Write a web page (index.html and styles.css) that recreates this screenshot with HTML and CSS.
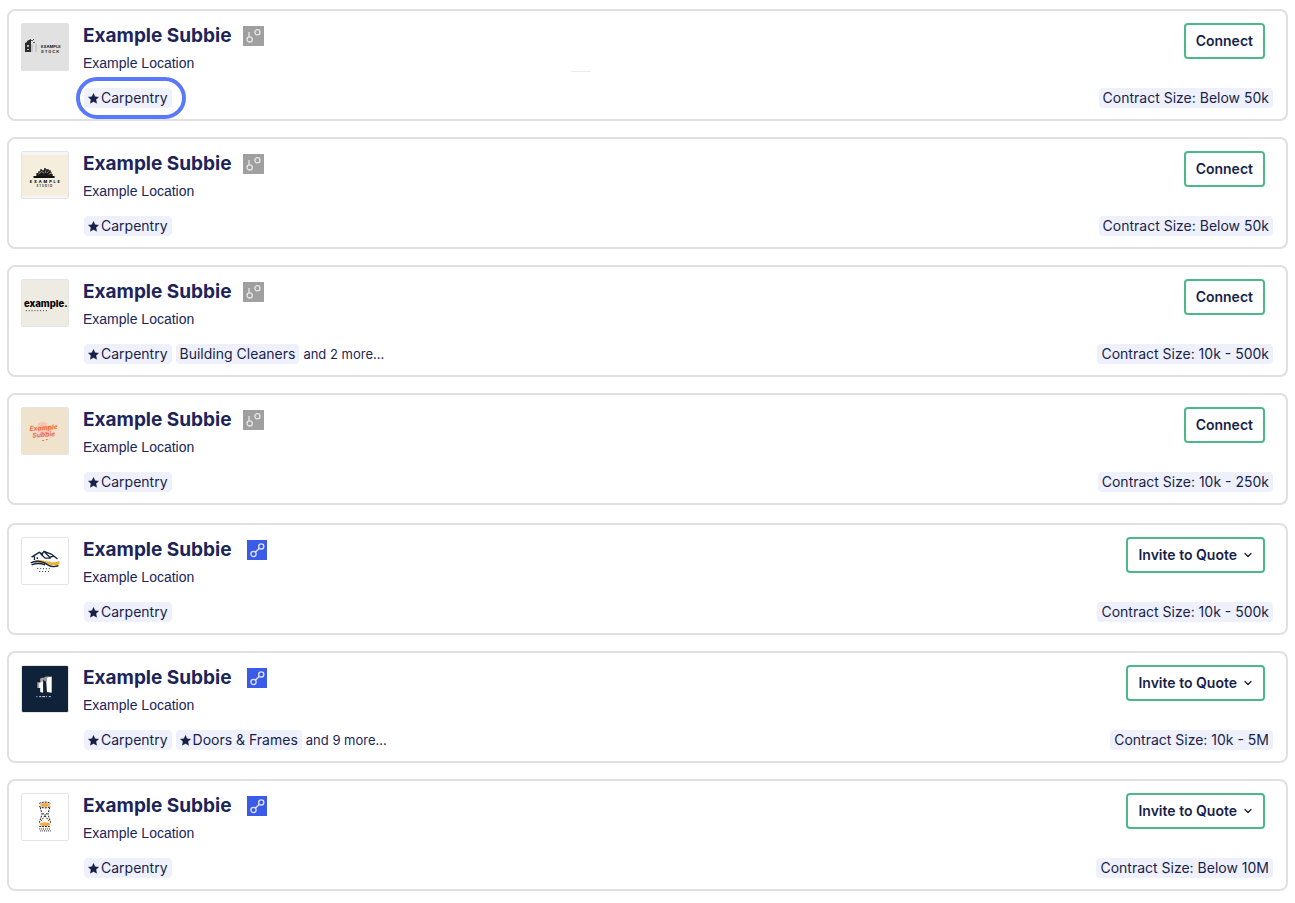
FILE: index.html
```html
<!DOCTYPE html>
<html lang="en">
<head>
  <meta charset="UTF-8" />
  <meta name="viewport" content="width=device-width, initial-scale=1.0" />
  <title>Subbies</title>
  <link rel="stylesheet" href="styles.css">
</head>
<body>
  <!-- shared icons -->
  <svg class="sprite" aria-hidden="true">
    <symbol id="star" viewBox="0 0 24 24">
      <path d="M12 1l3.3 7.2 7.7.9-5.7 5.3 1.5 7.8L12 18.3l-6.8 3.9 1.5-7.8L1 9.1l7.7-.9z" fill="currentColor" stroke="currentColor" stroke-linejoin="round"/>
    </symbol>
    <symbol id="unlinked" viewBox="0 0 21 20">
      <g fill="none" stroke="#e6e6e6" stroke-width="1.3">
        <circle cx="6.7" cy="13.4" r="2.6"/>
        <circle cx="14.4" cy="6.3" r="2.6"/>
        <path d="M6 11V6"/>
      </g>
    </symbol>
    <symbol id="linked" viewBox="0 0 20 20">
      <g fill="none" stroke="#dfe5ff" stroke-width="1.3">
        <circle cx="6.5" cy="14" r="2.6"/>
        <circle cx="14.2" cy="6.4" r="2.6"/>
        <path d="M8.3 12.2l4.1-4"/>
      </g>
    </symbol>
    <symbol id="chevron" viewBox="0 0 10 10">
      <path d="M2 3.5l3 3 3-3" fill="none" stroke="currentColor" stroke-width="1.3" stroke-linecap="round" stroke-linejoin="round"/>
    </symbol>
  </svg>

  <main>
    <section class="group">
      <article class="card">
        <svg class="logo" viewBox="0 0 48 48">
          <rect width="48" height="48" fill="#e1e1e1"/>
          <path d="M4 20l2-1v-1l4-2v13H4z" fill="#2b2b2b"/>
          <path d="M6 22h2v2H6zM6 26h2v1H6z" fill="#bbb"/>
          <path d="M10 17h2v1h-2zM12 19h2v1h-2zM12 16h1v1h-1z" fill="#555"/>
          <path d="M11 21v8M15 21v8" stroke="#b5b5b5"/>
          <text x="20" y="25" font-size="4" font-weight="800" fill="#333">EXAMPLE</text>
          <text x="20" y="30" font-size="4" font-weight="800" fill="#444" letter-spacing="1">STOCK</text>
        </svg>
        <div class="info">
          <div class="title">
            <h2>Example Subbie</h2>
            <svg class="status unlinked"><use href="#unlinked"/></svg>
          </div>
          <p class="location">Example Location</p>
          <div class="tags">
            <span class="tag highlight"><svg class="star"><use href="#star"/></svg>Carpentry</span>
          </div>
        </div>
        <span class="dash"></span>
        <div class="actions">
          <button type="button">Connect</button>
          <span class="tag">Contract Size: Below 50k</span>
        </div>
      </article>

      <article class="card">
        <svg class="logo framed" viewBox="0 0 48 48">
          <rect width="48" height="48" fill="#f5f5f5"/>
          <rect y="3" width="48" height="43" fill="#f5eedc"/>
          <path d="M12 25h22v2H12z" fill="#111"/>
          <path d="M15 25v-3h2v-2h2v-2h2v1h2v-2h2v1h3v1h2v2h1v2h1v2z" fill="#1c1a18"/>
          <path d="M17 23l3-2M20 20l3 2M25 19l-1 3M28 20l-2 2M31 22l-3 1" stroke="#d8d0c0" stroke-width=".7"/>
          <text x="8" y="32" font-size="4" font-weight="800" fill="#111" letter-spacing="2">EXAMPLE</text>
          <text x="15" y="36" font-size="3" font-weight="700" fill="#333" letter-spacing="1">STUDIO</text>
        </svg>
        <div class="info">
          <div class="title">
            <h2>Example Subbie</h2>
            <svg class="status unlinked"><use href="#unlinked"/></svg>
          </div>
          <p class="location">Example Location</p>
          <div class="tags">
            <span class="tag"><svg class="star"><use href="#star"/></svg>Carpentry</span>
          </div>
        </div>
        <div class="actions">
          <button type="button">Connect</button>
          <span class="tag">Contract Size: Below 50k</span>
        </div>
      </article>

      <article class="card">
        <svg class="logo framed" viewBox="0 0 48 48">
          <rect width="48" height="48" fill="#eeebe2"/>
          <text x="2" y="28" font-size="10" font-weight="800" fill="#000">example.</text>
          <path d="M4 32h24" stroke="#222" stroke-dasharray="1 2"/>
        </svg>
        <div class="info">
          <div class="title">
            <h2>Example Subbie</h2>
            <svg class="status unlinked"><use href="#unlinked"/></svg>
          </div>
          <p class="location">Example Location</p>
          <div class="tags">
            <span class="tag"><svg class="star"><use href="#star"/></svg>Carpentry</span>
            <span class="tag">Building Cleaners</span>
            <span class="more">and 2 more...</span>
          </div>
        </div>
        <div class="actions">
          <button type="button">Connect</button>
          <span class="tag">Contract Size: 10k - 500k</span>
        </div>
      </article>

      <article class="card">
        <svg class="logo framed" viewBox="0 0 48 48">
          <rect width="48" height="48" fill="#f0e3cd"/>
          <path d="M17 16l5-2 5 2-2 3h5l3 3-5 4-8 1-4-3z" fill="#f7c6b5"/>
          <g fill="#ee6a35" font-size="7" font-weight="700" font-style="italic">
            <text x="8" y="24" transform="rotate(-4 8 24)">Example</text>
            <text x="11" y="31" transform="rotate(-4 11 31)">Subbie</text>
          </g>
          <path d="M21 34h2M25 33h2" stroke="#ee6a35"/>
        </svg>
        <div class="info">
          <div class="title">
            <h2>Example Subbie</h2>
            <svg class="status unlinked"><use href="#unlinked"/></svg>
          </div>
          <p class="location">Example Location</p>
          <div class="tags">
            <span class="tag"><svg class="star"><use href="#star"/></svg>Carpentry</span>
          </div>
        </div>
        <div class="actions">
          <button type="button">Connect</button>
          <span class="tag">Contract Size: 10k - 250k</span>
        </div>
      </article>
    </section>

    <section class="group">
      <article class="card">
        <svg class="logo framed" viewBox="0 0 48 48">
          <rect width="48" height="48" fill="#fff"/>
          <path d="M14 23c7 0 10 1 16 2 3 1 6 0 9-1v3c-4 3-9 1-13 0-4-1-7-2-12-1z" fill="#efb231"/>
          <g fill="none" stroke="#14263f" stroke-width="1.4">
            <path d="M10 20l8-5 4 2M13 19v4M16 20v2M20 18l3-4 8 3 6 5M19 16l5 5M23 14l6 6 4-1M24 21h6"/>
            <path d="M9 26c6-3 12-2 18 2s7 1 11 1"/>
            <path d="M10 28c5-2 9-2 14 0"/>
          </g>
          <path d="M16 32h14M18 35h11" stroke="#14263f" stroke-dasharray="1 2"/>
        </svg>
        <div class="info">
          <div class="title">
            <h2>Example Subbie</h2>
            <svg class="status linked"><use href="#linked"/></svg>
          </div>
          <p class="location">Example Location</p>
          <div class="tags">
            <span class="tag"><svg class="star"><use href="#star"/></svg>Carpentry</span>
          </div>
        </div>
        <div class="actions">
          <button type="button">Invite to Quote<svg class="chevron"><use href="#chevron"/></svg></button>
          <span class="tag">Contract Size: 10k - 500k</span>
        </div>
      </article>

      <article class="card">
        <svg class="logo framed" viewBox="0 0 48 48">
          <rect width="48" height="48" fill="#10213a"/>
          <path d="M16 17h3v-4l3-1v6l-3 5h-3z" fill="#aaa"/>
          <path d="M18 18l4-2v12l-3-1v-4h-1zM25 12l6-1v17l-5-1z" fill="#fff"/>
          <path d="M21 13l4-2h5l-4 1v5l-3-2z" fill="#999"/>
          <path d="M15 32h15" stroke="#e5e8ee" stroke-dasharray="1 2 2 1 3 1"/>
        </svg>
        <div class="info">
          <div class="title">
            <h2>Example Subbie</h2>
            <svg class="status linked"><use href="#linked"/></svg>
          </div>
          <p class="location">Example Location</p>
          <div class="tags">
            <span class="tag"><svg class="star"><use href="#star"/></svg>Carpentry</span>
            <span class="tag"><svg class="star"><use href="#star"/></svg>Doors &amp; Frames</span>
            <span class="more">and 9 more...</span>
          </div>
        </div>
        <div class="actions">
          <button type="button">Invite to Quote<svg class="chevron"><use href="#chevron"/></svg></button>
          <span class="tag">Contract Size: 10k - 5M</span>
        </div>
      </article>

      <article class="card">
        <svg class="logo framed" viewBox="0 0 48 48">
          <rect width="48" height="48" fill="#fff"/>
          <ellipse cx="24" cy="11.5" rx="5" ry="2" fill="#f5a947"/>
          <ellipse cx="24" cy="31.5" rx="5.5" ry="2" fill="#f5a947"/>
          <g fill="none" stroke="#111" stroke-dasharray="2 1">
            <path d="M18 10c2-2 10-2 12 0M18 13c3 2 9 2 12 0M19 14l2 7-3 9M29 14l-2 7 3 9"/>
            <path d="M22 20l6 8M26 20l-6 8M18 34h12"/>
          </g>
          <path d="M18 36.5h12M19 38.5h11" stroke="#111" stroke-dasharray="1 1"/>
        </svg>
        <div class="info">
          <div class="title">
            <h2>Example Subbie</h2>
            <svg class="status linked"><use href="#linked"/></svg>
          </div>
          <p class="location">Example Location</p>
          <div class="tags">
            <span class="tag"><svg class="star"><use href="#star"/></svg>Carpentry</span>
          </div>
        </div>
        <div class="actions">
          <button type="button">Invite to Quote<svg class="chevron"><use href="#chevron"/></svg></button>
          <span class="tag">Contract Size: Below 10M</span>
        </div>
      </article>
    </section>
  </main>
</body>
</html>
```

FILE: styles.css
```css
:root {
  --text: #1b2559;
  --text-dark: #191f4a;
  --border: #e0e0e0;
  --tag: #eef0fc;
  --green: #4ab987;
  --blue: #3a5be8;
  --ring: #5a78fa;
}

* {
  box-sizing: border-box;
}

body {
  margin: 0;
  padding: 9px 7px;
  background: #fff;
  color: var(--text);
  font-family: Inter, "Liberation Sans", sans-serif;
  font-size: 14px;
  line-height: 20px;
}

.sprite {
  display: none;
}

.group {
  display: grid;
  gap: 16px;
}

.group + .group {
  margin-top: 18px;
}

.card {
  position: relative;
  display: flex;
  gap: 14px;
  padding: 12px 13px 11px 12px;
  border: 2px solid var(--border);
  border-radius: 8px;
}

.logo {
  flex: none;
  width: 48px;
  height: 48px;
  border-radius: 2px;
}

.logo.framed {
  border: 1px solid #e4e4e4;
}

.info {
  flex: 1;
}

.title {
  display: flex;
  align-items: center;
}

h2 {
  margin: 0;
  font-size: 19px;
  line-height: 26px;
  font-weight: 700;
}

.status {
  width: 21px;
  height: 20px;
  margin-left: 11px;
}

.status.unlinked {
  background: #9f9f9f;
}

.status.linked {
  width: 20px;
  margin-left: 15px;
  background: var(--blue);
}

.location {
  margin: 4px 0 15px;
  font-family: "Liberation Sans", Arial, sans-serif;
}

.tags {
  display: flex;
  gap: 4px;
  margin-left: 1px;
}

.tag {
  position: relative;
  display: flex;
  align-items: center;
  padding: 0 4px;
  border-radius: 4px;
  background: var(--tag);
  color: var(--text-dark);
}

.more {
  font-size: 13px;
}

.star {
  width: 11px;
  height: 11px;
  margin-right: 2px;
}

.highlight::after {
  content: "";
  position: absolute;
  inset: -11px -14px -11px -8px;
  border: 4px solid var(--ring);
  border-radius: 22px;
}

.dash {
  position: absolute;
  top: 60px;
  left: 44%;
  width: 20px;
  height: 1px;
  background: #ececec;
}

.actions {
  display: flex;
  flex-direction: column;
  align-items: flex-end;
  justify-content: space-between;
}

button {
  display: flex;
  align-items: center;
  height: 36px;
  margin-right: 8px;
  padding: 0 10px;
  border: 2px solid var(--green);
  border-radius: 4px;
  background: #fff;
  color: var(--text-dark);
  font: inherit;
  font-weight: 600;
  cursor: pointer;
}

.chevron {
  width: 10px;
  height: 10px;
  margin-left: 6px;
}
```
